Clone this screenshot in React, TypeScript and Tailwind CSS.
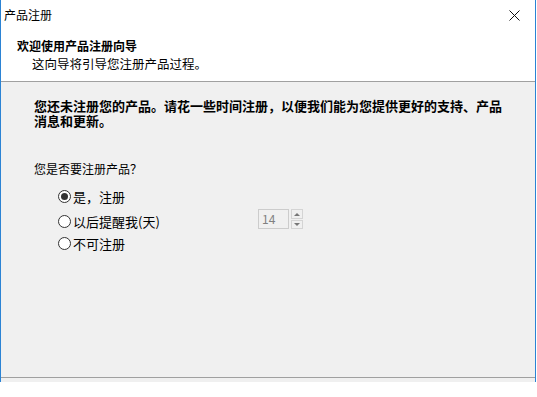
import React from 'react';

const font = { fontFamily: '"Noto Sans CJK SC", "Noto Sans", sans-serif' };

const Radio: React.FC<{ checked?: boolean; label: string }> = ({ checked, label }) => (
  <div className="flex items-center h-[20px]">
    <span className="w-[13px] h-[13px] rounded-full border border-[#333333] bg-white flex items-center justify-center">
      {checked && <span className="w-[7px] h-[7px] rounded-full bg-[#333333]" />}
    </span>
    <span className="ml-[2px] text-[13px] text-black leading-none">{label}</span>
  </div>
);

export default function App() {
  return (
    <div className="w-[537px] h-[397px] bg-white" style={font}>
      <div className="w-[536px] h-[382px] flex flex-col border-x border-[#2b83d4]">
        {/* title bar */}
        <div className="h-[30px] bg-white flex items-center justify-between">
          <span className="pl-[3px] text-[12px] text-black leading-none">产品注册</span>
          <svg width="11" height="11" viewBox="0 0 11 11" className="mr-[15px]">
            <path d="M0.5 0.5 L10.5 10.5 M10.5 0.5 L0.5 10.5" stroke="#111" strokeWidth="1" />
          </svg>
        </div>

        {/* header */}
        <div className="h-[52px] bg-white pt-[9px] pl-[16px] border-b border-[#a0a0a0]">
          <div className="text-[12px] font-bold text-black leading-[14px]">欢迎使用产品注册向导</div>
          <div className="pl-[15px] mt-[4px] text-[12.5px] text-black leading-[14px]">这向导将引导您注册产品过程。</div>
        </div>

        {/* body */}
        <div className="flex-1 bg-[#f0f0f0] pl-[33px] pt-[16px] border-b border-[#a0a0a0]">
          <p className="text-[13px] font-bold text-black leading-[15px] w-[480px]">
            您还未注册您的产品。请花一些时间注册，以便我们能为您提供更好的支持、产品消息和更新。
          </p>
          <div className="mt-[34px] text-[12px] text-black leading-[14px]">您是否要注册产品？</div>
          <div className="pl-[24px] mt-[10px] flex flex-col">
            <Radio checked label="是，注册" />
            <div className="flex items-center mt-[5px]">
              <div className="w-[200px]">
                <Radio label="以后提醒我(天)" />
              </div>
              <div className="flex items-center -mt-[4px]">
                <div className="w-[31px] h-[20px] border border-[#cccccc] bg-[#f0f0f0] flex items-center pl-[3px] text-[12px] text-[#808080]">
                  14
                </div>
                <div className="ml-[2px] flex flex-col gap-[1px]">
                  <div className="w-[12px] h-[10px] border border-[#d4d4d4] bg-[#f0f0f0] flex items-center justify-center">
                    <svg width="6" height="3" viewBox="0 0 6 3"><path d="M0 3 L3 0 L6 3 Z" fill="#777" /></svg>
                  </div>
                  <div className="w-[12px] h-[9px] border border-[#d4d4d4] bg-[#f0f0f0] flex items-center justify-center">
                    <svg width="6" height="3" viewBox="0 0 6 3"><path d="M0 0 L6 0 L3 3 Z" fill="#777" /></svg>
                  </div>
                </div>
              </div>
            </div>
            <div className="mt-[2px]">
              <Radio label="不可注册" />
            </div>
          </div>
        </div>
        <div className="h-[4px] bg-[#f0f0f0]" />
      </div>
    </div>
  );
}
